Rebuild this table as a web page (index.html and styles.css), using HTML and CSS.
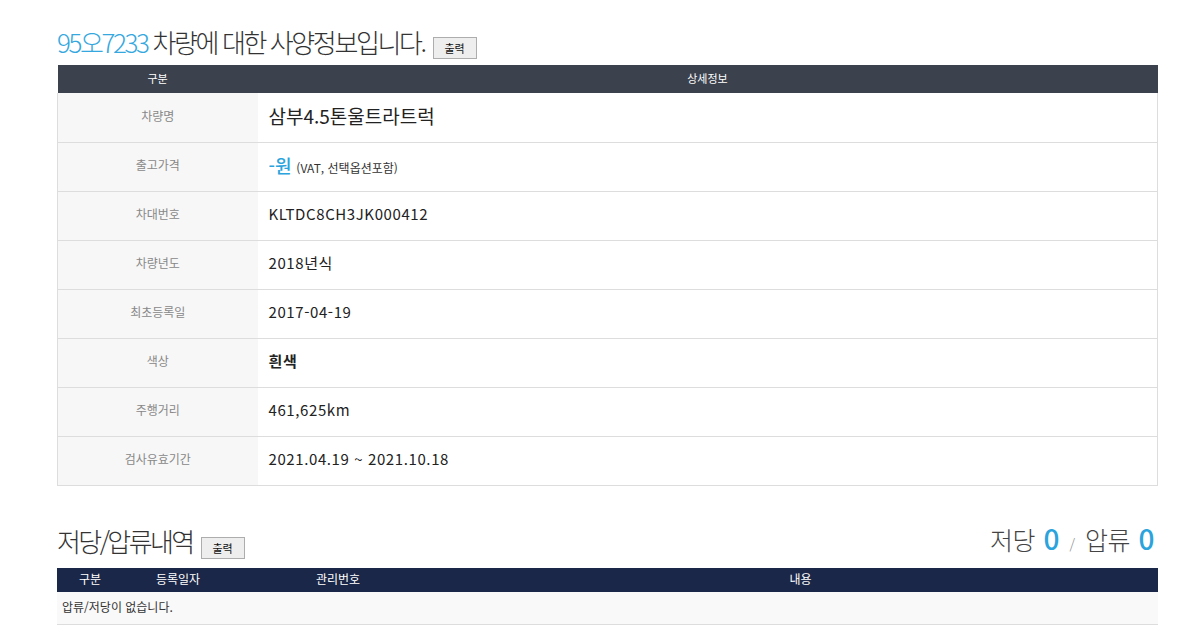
FILE: index.html
```html
<!DOCTYPE html>
<html lang="ko">
<head>
<meta charset="utf-8">
<link rel="stylesheet" href="styles.css">
</head>
<body>
<div class="page">
  <div class="title-row">
    <h1 class="title"><span class="plate">95오7233</span> 차량에 대한 사양정보입니다.</h1>
    <button class="print">출력</button>
  </div>
  <table class="spec">
    <thead>
      <tr><th class="c-label">구분</th><th>상세정보</th></tr>
    </thead>
    <tbody>
      <tr><td class="c-label">차량명</td><td class="val big">삼부4.5톤울트라트럭</td></tr>
      <tr><td class="c-label">출고가격</td><td class="val"><span class="price">-원</span> <span class="note">(VAT, 선택옵션포함)</span></td></tr>
      <tr><td class="c-label">차대번호</td><td class="val">KLTDC8CH3JK000412</td></tr>
      <tr><td class="c-label">차량년도</td><td class="val">2018년식</td></tr>
      <tr><td class="c-label">최초등록일</td><td class="val">2017-04-19</td></tr>
      <tr><td class="c-label">색상</td><td class="val bold">흰색</td></tr>
      <tr><td class="c-label">주행거리</td><td class="val">461,625km</td></tr>
      <tr><td class="c-label">검사유효기간</td><td class="val">2021.04.19 ~ 2021.10.18</td></tr>
    </tbody>
  </table>

  <div class="sec-row">
    <div class="sec-left">
      <h2 class="sec-title">저당/압류내역</h2>
      <button class="print print2">출력</button>
    </div>
    <div class="counts">저당 <span class="num">0</span> <span class="slash">/</span> 압류 <span class="num">0</span></div>
  </div>
  <table class="lien">
    <colgroup><col class="w1"><col class="w2"><col class="w3"><col></colgroup>
    <thead>
      <tr><th>구분</th><th>등록일자</th><th>관리번호</th><th>내용</th></tr>
    </thead>
    <tbody>
      <tr><td colspan="4" class="empty">압류/저당이 없습니다.</td></tr>
    </tbody>
  </table>
</div>
</body>
</html>
```

FILE: styles.css
```css
* { box-sizing: border-box; }
html, body { margin: 0; padding: 0; background: #fff; }
body {
  font-family: "Noto Sans CJK KR", "Noto Sans", sans-serif;
  color: #333;
}
.page {
  width: 1101px;
  margin-left: 57px;
  padding-top: 22px;
}
.title-row {
  display: flex;
  align-items: flex-end;
  gap: 8px;
  height: 43px;
}
.title {
  margin: 0 0 8px 0;
  font-size: 26px;
  font-weight: 300;
  letter-spacing: -2.4px;
  line-height: 30px;
  color: #333;
}
.plate { color: #35a8e0; }
.print {
  font-family: "Noto Sans CJK KR", sans-serif;
  font-size: 11px;
  height: 22px;
  width: 44px;
  padding: 0;
  border: 1px solid #adadad;
  background: #eeeeee;
  color: #111;
  margin-bottom: 6px;
  line-height: 20px;
}
.print2 { margin-bottom: 9px; }
table {
  width: 100%;
  border-collapse: collapse;
  table-layout: fixed;
}
.spec thead th {
  background: #3c414e;
  color: #fff;
  font-weight: 400;
  font-size: 11px;
  height: 28px;
  padding: 0 0 2px 0;
}
.spec th.c-label { width: 200px; }
.spec tbody td {
  height: 49px;
  border-bottom: 1px solid #dddddd;
  padding: 0 0 4px 0;
}
.spec tbody td:last-child { border-right: 1px solid #dddddd; }
.spec tbody td.c-label {
  background: #f7f7f7;
  text-align: center;
  font-size: 12px;
  color: #888;
  border-left: 1px solid #dddddd;
}
.val {
  padding-left: 11px !important;
  font-size: 15px;
  color: #222;
  letter-spacing: 0.6px;
}
.val.big { font-size: 19px; letter-spacing: 0; }
.val.bold { font-weight: 700; }
.price { color: #2ba3dc; font-size: 18px; font-weight: 500; letter-spacing: 0; }
.note { font-size: 12px; color: #333; letter-spacing: 0; }

.sec-row {
  display: flex;
  justify-content: space-between;
  align-items: flex-end;
  margin-top: 36px;
  height: 46px;
}
.sec-left { display: flex; align-items: flex-end; gap: 8px; }
.sec-title {
  margin: 0 0 12px 0;
  font-size: 26px;
  font-weight: 300;
  letter-spacing: -2.6px;
  line-height: 30px;
  color: #333;
}
.counts {
  font-size: 25px;
  font-weight: 300;
  color: #444;
  line-height: 30px;
  margin-bottom: 9px;
  padding-right: 4px;
  letter-spacing: -0.5px;
}
.counts .num { color: #2ba3dc; font-weight: 500; font-size: 28px; margin-left: 2px; margin-right: 0; }
.counts .slash { font-size: 14px; color: #888; margin: 0 4px; }
.lien col.w1 { width: 66px; }
.lien col.w2 { width: 110px; }
.lien col.w3 { width: 210px; }
.lien thead th {
  background: #1b2748;
  color: #fff;
  font-weight: 400;
  font-size: 12px;
  height: 24px;
  padding: 0 0 2px 0;
}
.lien td.empty {
  background: #f9f9f9;
  height: 33px;
  font-size: 12px;
  color: #333;
  padding: 0 0 2px 5px;
  border-bottom: 1px solid #dddddd;
}
```
